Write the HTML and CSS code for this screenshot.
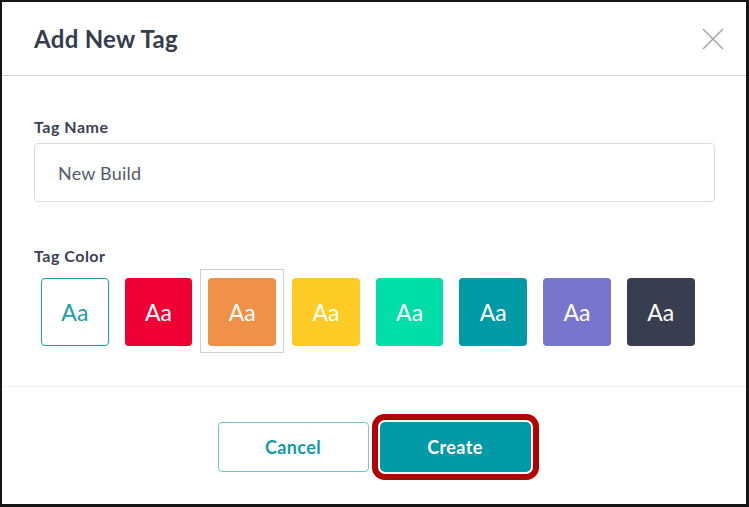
FILE: index.html
```html
<!DOCTYPE html>
<html lang="en">
<head>
    <meta charset="UTF-8">
    <meta name="viewport" content="width=device-width, initial-scale=1.0">
    <title>Add New Tag</title>
    <link rel="stylesheet" href="styles.css">
</head>
<body>
    <div class="modal">
        <div class="modal-header">
            <h2 class="modal-title">Add New Tag</h2>
            <button class="close-btn" aria-label="Close">
                <svg width="22" height="22" viewBox="0 0 22 22">
                    <path d="M1 1 L21 21 M21 1 L1 21" stroke="#a3a7b0" stroke-width="1.6" fill="none"/>
                </svg>
            </button>
        </div>

        <div class="modal-body">
            <label class="field-label">Tag Name</label>
            <div class="text-input">New Build</div>

            <label class="field-label color-label">Tag Color</label>
            <div class="swatches">
                <div class="swatch-cell"><div class="swatch outline">Aa</div></div>
                <div class="swatch-cell"><div class="swatch red">Aa</div></div>
                <div class="swatch-cell selected"><div class="swatch orange">Aa</div></div>
                <div class="swatch-cell"><div class="swatch yellow">Aa</div></div>
                <div class="swatch-cell"><div class="swatch green">Aa</div></div>
                <div class="swatch-cell"><div class="swatch teal">Aa</div></div>
                <div class="swatch-cell"><div class="swatch purple">Aa</div></div>
                <div class="swatch-cell"><div class="swatch dark">Aa</div></div>
            </div>
        </div>

        <div class="modal-footer">
            <button class="btn btn-cancel">Cancel</button>
            <button class="btn btn-create">Create</button>
        </div>
    </div>
</body>
</html>
```

FILE: styles.css
```css
body {
    margin: 0;
    font-family: Lato, "Open Sans", sans-serif;
    background-color: #fff;
}
.modal {
    width: 749px;
    height: 507px;
    box-sizing: border-box;
    border: 2px solid #151515;
    border-right-width: 3px;
    border-bottom-width: 3px;
    background-color: #fff;
    display: flex;
    flex-direction: column;
}
.modal-header {
    height: 73px;
    border-bottom: 1px solid #d3d3d3;
    display: flex;
    align-items: center;
    justify-content: space-between;
    padding: 0 22px 0 32px;
}
.modal-title {
    margin: 0;
    font-size: 24px;
    font-weight: 700;
    color: #353c4e;
    letter-spacing: 0.3px;
}
.close-btn {
    border: none;
    background: none;
    padding: 0;
    width: 22px;
    height: 22px;
    cursor: pointer;
}
.modal-body {
    height: 311px;
    box-sizing: border-box;
    padding: 41px 31px 0 32px;
    border-bottom: 1px solid #f2f2f2;
}
.field-label {
    display: block;
    font-size: 16px;
    line-height: 20px;
    font-weight: 700;
    color: #3b4152;
    letter-spacing: 0.5px;
    margin-bottom: 6px;
}
.text-input {
    height: 57px;
    border: 1px solid #dadce0;
    border-radius: 4px;
    padding: 0 23px;
    display: flex;
    align-items: center;
    font-size: 18px;
    color: #555b6a;
    letter-spacing: 0.2px;
}
.color-label {
    margin-top: 44px;
    margin-bottom: 3px;
}
.swatches {
    display: flex;
    margin-left: -1px;
}
.swatch-cell {
    width: 83.7px;
    height: 84px;
    box-sizing: border-box;
    border: 1px solid transparent;
    padding: 8px 7px 7px;
}
.swatch-cell.selected {
    border-color: #cfcfcf;
}
.swatch {
    height: 68px;
    border-radius: 4px;
    box-sizing: border-box;
    display: flex;
    align-items: center;
    justify-content: center;
    font-size: 23px;
    color: #fff;
}
.outline {
    border: 1px solid #1aa0aa;
    color: #1aa0aa;
}
.red { background-color: #ee0034; }
.orange { background-color: #ef9148; }
.yellow { background-color: #fdcd25; }
.green { background-color: #00dea8; }
.teal { background-color: #0099a6; }
.purple { background-color: #7875cd; }
.dark { background-color: #383e50; }
.modal-footer {
    flex: 1;
    display: flex;
    justify-content: center;
    align-items: center;
    gap: 11px;
    padding-top: 3px;
}
.btn {
    font-family: Lato, "Open Sans", sans-serif;
    font-size: 18px;
    font-weight: 700;
    letter-spacing: 0.4px;
    border-radius: 4px;
    height: 50px;
    cursor: pointer;
}
.btn-cancel {
    width: 151px;
    background-color: #fff;
    border: 1px solid #70c8cd;
    color: #149aa5;
}
.btn-create {
    width: 151px;
    background-color: #0099a6;
    border: none;
    color: #fff;
    box-shadow: 0 0 0 2px #fff, 0 0 0 8px #b30000;
    border-radius: 5px;
}
```
